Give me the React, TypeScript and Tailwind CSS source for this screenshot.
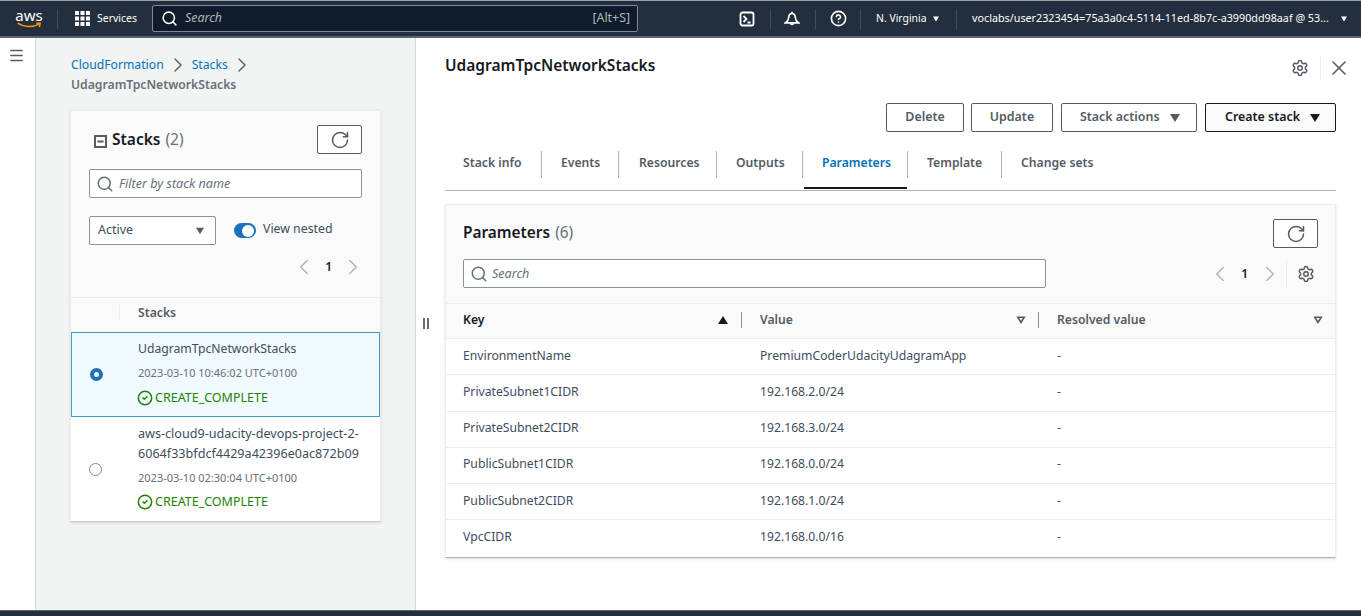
import { ChevronLeft, ChevronRight, CircleCheck, CircleHelp, Menu, RotateCw, Search, Settings, X } from "lucide-react";

const font = "font-['Noto_Sans','Open_Sans',sans-serif]";

const params = [
  ["EnvironmentName", "PremiumCoderUdacityUdagramApp"],
  ["PrivateSubnet1CIDR", "192.168.2.0/24"],
  ["PrivateSubnet2CIDR", "192.168.3.0/24"],
  ["PublicSubnet1CIDR", "192.168.0.0/24"],
  ["PublicSubnet2CIDR", "192.168.1.0/24"],
  ["VpcCIDR", "192.168.0.0/16"],
];

const tabs = [
  { label: "Stack info", cls: "w-[97px] pl-[18px]" },
  { label: "Events", cls: "w-[77px] pl-[19px]" },
  { label: "Resources", cls: "w-[98px] pl-[20px]" },
  { label: "Outputs", cls: "w-[86px] pl-[19px]" },
  { label: "Parameters", cls: "w-[105px] pl-[19px]" },
  { label: "Template", cls: "w-[94px] pl-[19px]" },
  { label: "Change sets", cls: "pl-[19px]" },
];

function Caret({ className }: { className: string }) {
  return (
    <svg viewBox="0 0 12 10" className={className} fill="currentColor">
      <path d="M1 1h10L6 9z" />
    </svg>
  );
}

function HollowCaret() {
  return (
    <svg viewBox="0 0 12 10" className="ml-auto mr-[12px] h-[8px] w-[10px] text-[#545b64]" fill="none" stroke="currentColor" strokeWidth="2">
      <path d="M2 1.5h8L6 8z" />
    </svg>
  );
}

function GridIcon() {
  const cells = [0, 5.5, 11];
  return (
    <svg viewBox="0 0 15 15" className="ml-[17px] h-[15px] w-[15px]" fill="currentColor">
      {cells.map((y) => cells.map((x) => <rect key={`${x}-${y}`} x={x} y={y} width="4" height="4" />))}
    </svg>
  );
}

function TerminalIcon() {
  return (
    <svg viewBox="0 0 16 16" className="ml-[101px] h-[16px] w-[16px]" fill="none" stroke="currentColor" strokeWidth="1.8">
      <rect x="1.5" y="1.5" width="13" height="13" rx="2" />
      <path d="M4.5 5l3 3-3 3M8.5 11.5h3" />
    </svg>
  );
}

function BellIcon() {
  return (
    <svg viewBox="0 0 16 16" className="ml-[13px] h-[16px] w-[16px]" fill="none" stroke="currentColor" strokeWidth="1.7">
      <path d="M8 2.5C5.5 2.5 4.8 4.5 4.6 7c-.2 2.2-1 3.5-3 4.8h12.8c-2-1.3-2.8-2.6-3-4.8-.2-2.5-.9-4.5-3.400-4.500z" />
      <path d="M8 .8v1.700M6.300 12.200a1.800 1.800 0 0 0 3.400 0" />
    </svg>
  );
}

function MinusBox() {
  return (
    <svg viewBox="0 0 13 13" className="mt-[4px] h-[13px] w-[13px] text-[#545b64]" fill="none" stroke="currentColor" strokeWidth="2">
      <rect x="1" y="1" width="11" height="11" />
      <path d="M3.500 6.500h6" />
    </svg>
  );
}

function TopBar() {
  return (
    <header className="flex h-[38px] items-center border-t border-t-[#9aa0a6] border-b-2 border-b-[#596270] bg-[#232f3e] text-white">
      <div className="ml-[12px] flex w-[34px] flex-col items-center">
        <span className="text-[15px] leading-[14px]">aws</span>
        <svg viewBox="0 0 30 8" className="h-[7px] w-[24px] text-[#ff9900]" fill="none" stroke="currentColor" strokeWidth="1.8">
          <path d="M1 1c7 5 18 6 27 1M24 1l5 0-1 5" />
        </svg>
      </div>
      <div className="ml-[11px] h-[20px] w-px bg-[#414d5c]" />
      <GridIcon />
      <span className="ml-[7px] text-[10.5px]">Services</span>
      <div className="ml-[15px] flex h-[27px] w-[486px] items-center rounded-[2px] border border-[#7d8998] bg-[#0f1b2a] pl-[8px] pr-[7px] text-[12.4px] text-[#aab7b8]">
        <Search className="h-[17px] w-[17px] text-white" strokeWidth={2.2} />
        <span className="ml-[7px] italic">Search</span>
        <span className="ml-auto">[Alt+S]</span>
      </div>
      <TerminalIcon />
      <div className="ml-[15px] h-[20px] w-px bg-[#414d5c]" />
      <BellIcon />
      <div className="ml-[15px] h-[20px] w-px bg-[#414d5c]" />
      <CircleHelp className="ml-[14px] h-[17px] w-[17px]" strokeWidth={2.3} />
      <div className="ml-[13px] h-[20px] w-px bg-[#414d5c]" />
      <span className="ml-[15px] w-[51px] text-[10.4px] whitespace-nowrap">N. Virginia</span>
      <Caret className="ml-[5px] h-[6px] w-[8px]" />
      <div className="ml-[16px] h-[20px] w-px bg-[#414d5c]" />
      <span className="ml-[15px] w-[358px] text-[10.75px] whitespace-nowrap">voclabs/user2323454=75a3a0c4-5114-11ed-8b7c-a3990dd98aaf @ 53...</span>
      <Caret className="ml-[10px] h-[6px] w-[8px]" />
    </header>
  );
}

function StackRow({ lines, time, selected }: { lines: string[]; time: string; selected?: boolean }) {
  return (
    <div className={`flex ${selected ? "h-[85px] border border-[#3f9ec4] bg-[#f1faff]" : "h-[104px] bg-white"}`}>
      <div className={`flex shrink-0 items-center pl-[18px] ${selected ? "w-[66px]" : "w-[67px]"}`}>
        {selected ? (
          <span className="h-[13px] w-[13px] rounded-full border-[4px] border-[#1f6fbf] bg-white" />
        ) : (
          <span className="h-[13px] w-[13px] rounded-full border border-[#7d8998] bg-white" />
        )}
      </div>
      <div className={`text-[#414d5c] ${selected ? "pt-[6px] text-[12.2px]" : "pt-[7px] text-[12.6px]"}`}>
        {lines.map((l) => (
          <div key={l} className="leading-[20px] whitespace-nowrap">{l}</div>
        ))}
        <div className="mt-[6px] text-[11px] leading-[16px] text-[#687078]">{time}</div>
        <div className={`flex items-center gap-[2px] text-[12.5px] leading-[16px] text-[#1d8102] ${selected ? "mt-[9px]" : "mt-[8px]"}`}>
          <CircleCheck className="-ml-[1px] h-[16px] w-[16px]" strokeWidth={2.2} />
          CREATE_COMPLETE
        </div>
      </div>
    </div>
  );
}

function Sidebar() {
  return (
    <aside className="w-[380px] shrink-0 border-r border-r-[#d5dbdb] bg-[#f2f3f3] pl-[35px] pt-[15px]">
      <div className="flex items-center text-[12.2px] text-[#0073bb]">
        CloudFormation
        <ChevronRight className="mx-[2px] h-[24px] w-[24px] text-[#545b64]" strokeWidth={1.4} />
        Stacks
        <ChevronRight className="mx-[2px] h-[24px] w-[24px] text-[#545b64]" strokeWidth={1.4} />
      </div>
      <div className="text-[12.2px] leading-[16px] font-semibold text-[#687078]">UdagramTpcNetworkStacks</div>
      <section className="-ml-[1px] mt-[17px] w-[311px] border border-[#eaeded] border-b-[#c6cbcb] bg-white shadow-sm">
        <div className="bg-[#fafafa] pb-[17px] pt-[14px]">
          <div className="flex h-[29px] items-center justify-between pl-[23px] pr-[18px]">
            <div className="flex items-center">
              <MinusBox />
              <span className="ml-[5px] pt-[1px] text-[15.5px] font-semibold text-[#16191f]">Stacks</span>
              <span className="ml-[5px] pt-[1px] text-[15.5px] text-[#687078]">(2)</span>
            </div>
            <div className="flex h-[29px] w-[45px] items-center justify-center rounded-[2px] border border-[#545b64] bg-white">
              <RotateCw className="h-[20px] w-[20px] text-[#545b64]" strokeWidth={1.8} />
            </div>
          </div>
          <div className="mx-[18px] mt-[15px] flex h-[29px] items-center rounded-[2px] border border-[#879596] bg-white pl-[6px]">
            <Search className="h-[18px] w-[18px] text-[#687078]" />
            <span className="ml-[5px] pt-[1px] text-[12.6px] italic text-[#687078]">Filter by stack name</span>
          </div>
          <div className="mx-[18px] mt-[18px] flex items-center">
            <div className="flex h-[29px] w-[127px] items-center justify-between rounded-[2px] border border-[#879596] bg-white pl-[8px] pr-[10px] text-[12.5px] text-[#414d5c]">
              Active
              <Caret className="h-[8px] w-[10px] text-[#545b64]" />
            </div>
            <span className="ml-[18px] flex h-[15px] w-[22px] items-center justify-end rounded-full bg-[#1f6fbf] pr-[2px]">
              <span className="h-[12px] w-[12px] rounded-full bg-white" />
            </span>
            <span className="mb-[2px] ml-[7px] text-[12.3px] text-[#414d5c]">View nested</span>
          </div>
          <div className="mt-[9px] flex items-center justify-end pr-[14px] text-xs font-semibold text-[#16191f]">
            <ChevronLeft className="h-[26px] w-[26px] text-[#aab7b8]" strokeWidth={1.4} />
            <span className="mx-[8px]">1</span>
            <ChevronRight className="h-[26px] w-[26px] text-[#aab7b8]" strokeWidth={1.4} />
          </div>
        </div>
        <div className="flex h-[35px] items-center border-t border-[#eaeded] bg-[#fafafa] pb-[4px] text-[12.2px] font-semibold text-[#545b64]">
          <div className="ml-[48px] h-[16px] w-px bg-[#eaeded]" />
          <span className="ml-[18px]">Stacks</span>
        </div>
        <StackRow selected lines={["UdagramTpcNetworkStacks"]} time="2023-03-10 10:46:02 UTC+0100" />
        <StackRow lines={["aws-cloud9-udacity-devops-project-2-", "6064f33bfdcf4429a42396e0ac872b09"]} time="2023-03-10 02:30:04 UTC+0100" />
      </section>
    </aside>
  );
}

function ActionButton({ label, cls, primary, caret }: { label: string; cls: string; primary?: boolean; caret?: boolean }) {
  return (
    <div className={`flex h-[29px] items-center rounded-[2px] border text-[12.4px] font-semibold ${cls} ${primary ? "border-[#16191f] bg-[#fafafa] text-[#16191f]" : "border-[#545b64] bg-white text-[#545b64]"}`}>
      <span className="pb-[1px]">{label}</span>
      {caret ? <Caret className={`ml-[9px] h-[10px] w-[12px] ${primary ? "text-[#16191f]" : "text-[#545b64]"}`} /> : null}
    </div>
  );
}

function Detail() {
  return (
    <main className="min-w-0 flex-1 bg-white pr-[25px]">
      <div className="flex h-[56px] items-center justify-between">
        <h1 className="text-[15.5px] font-semibold text-[#16191f]">UdagramTpcNetworkStacks</h1>
        <div className="-mr-[15px] mt-[3px] flex items-center">
          <Settings className="h-[18px] w-[18px] text-[#545b64]" />
          <div className="ml-[11px] h-[22px] w-px bg-[#eaeded]" />
          <X className="ml-[6px] h-[24px] w-[24px] text-[#545b64]" strokeWidth={1.6} />
        </div>
      </div>
      <div className="mt-[9px] flex justify-end">
        <ActionButton label="Delete" cls="w-[78px] justify-center" />
        <ActionButton label="Update" cls="ml-[7px] w-[82px] justify-center" />
        <ActionButton label="Stack actions" cls="ml-[8px] w-[136px] pl-[18px]" caret />
        <ActionButton label="Create stack" cls="ml-[8px] w-[131px] pl-[19px]" primary caret />
      </div>
      <nav className="mt-[19px] flex h-[40px] border-b border-b-[#aab7b8] pb-[12px] text-[12.2px] font-semibold text-[#545b64]">
        {tabs.map((t, i) => (
          <div key={t.label} className={`relative flex items-center pb-[3px] ${t.cls} ${i === 6 ? "" : "border-r border-r-[#aab7b8]"} ${t.label === "Parameters" ? "text-[#0073bb]" : ""}`}>
            {t.label}
            {t.label === "Parameters" ? <span className="absolute bottom-[-11px] left-[1px] right-0 h-[2px] bg-[#16191f]" /> : null}
          </div>
        ))}
      </nav>
      <section className="mt-[13px] border border-[#eaeded] border-b-[#aab7b8] shadow-sm">
        <div className="bg-[#fafafa] pb-[15px] pl-[17px] pr-[17px] pt-[14px]">
          <div className="flex h-[29px] items-center justify-between">
            <div className="pb-[1px] text-[15.4px]">
              <span className="font-semibold text-[#16191f]">Parameters</span>
              <span className="ml-[5px] text-[#687078]">(6)</span>
            </div>
            <div className="flex h-[29px] w-[45px] items-center justify-center rounded-[2px] border border-[#545b64] bg-white">
              <RotateCw className="h-[20px] w-[20px] text-[#545b64]" strokeWidth={1.8} />
            </div>
          </div>
          <div className="mt-[11px] flex items-center">
            <div className="flex h-[29px] w-[583px] items-center rounded-[2px] border border-[#879596] bg-white pl-[6px]">
              <Search className="h-[18px] w-[18px] text-[#687078]" />
              <span className="ml-[4px] pt-[1px] text-[12.5px] italic text-[#687078]">Search</span>
            </div>
            <div className="ml-auto flex items-center pr-[3px] text-xs font-semibold text-[#16191f]">
              <ChevronLeft className="h-[26px] w-[26px] text-[#aab7b8]" strokeWidth={1.4} />
              <span className="ml-[8px] mr-[9px]">1</span>
              <ChevronRight className="h-[26px] w-[26px] text-[#aab7b8]" strokeWidth={1.4} />
              <div className="ml-[3px] h-[28px] w-px bg-[#eaeded]" />
              <Settings className="ml-[10px] h-[18px] w-[18px] text-[#545b64]" />
            </div>
          </div>
        </div>
        <div className="grid h-[36px] grid-cols-[297px_297px_1fr] items-center border-y border-[#eaeded] bg-[#fafafa] pb-[2px] text-[12.2px] font-semibold text-[#545b64]">
          <div className="flex items-center pl-[17px] text-[#16191f]">
            Key
            <Caret className="ml-auto mr-[12px] h-[10px] w-[12px] rotate-180 text-[#16191f]" />
            <div className="mr-[1px] h-[16px] w-px bg-[#879596]" />
          </div>
          <div className="flex items-center pl-[17px]">
            Value
            <HollowCaret />
            <div className="mr-[1px] h-[16px] w-px bg-[#879596]" />
          </div>
          <div className="flex items-center pl-[17px]">
            Resolved value
            <HollowCaret />
          </div>
        </div>
        {params.map(([k, v], i) => (
          <div key={k} className={`grid h-[36.3px] grid-cols-[297px_297px_1fr] items-center bg-white pb-[2px] text-[12.2px] text-[#414d5c] ${i < 5 ? "border-b border-[#eaeded]" : ""}`}>
            <span className="pl-[17px]">{k}</span>
            <span className="pl-[17px]">{v}</span>
            <span className="pl-[17px]">-</span>
          </div>
        ))}
      </section>
    </main>
  );
}

export default function App() {
  return (
    <div className={`flex h-[616px] w-[1361px] flex-col overflow-hidden bg-white ${font}`}>
      <TopBar />
      <div className="flex min-h-0 flex-1">
        <div className="flex w-[36px] shrink-0 justify-center border-r border-r-[#d5dbdb] bg-white pr-[2px] pt-[9px]">
          <Menu className="h-[17px] w-[17px] text-[#545b64]" />
        </div>
        <Sidebar />
        <div className="w-[29px] shrink-0 pl-[7px] pt-[280px]">
          <svg viewBox="0 0 6 11" className="h-[11px] w-[6px] text-[#687078]" fill="currentColor">
            <rect x="0" y="0" width="2" height="11" />
            <rect x="4" y="0" width="2" height="11" />
          </svg>
        </div>
        <Detail />
      </div>
      <div className="h-[6px] border-t border-t-[#596270] bg-[#232f3e]" />
    </div>
  );
}
